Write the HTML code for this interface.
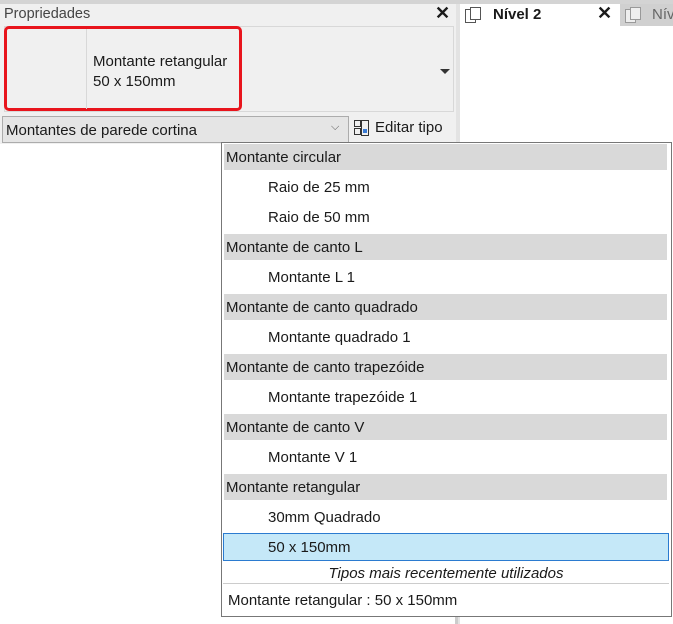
<!DOCTYPE html>
<html><head><meta charset="utf-8"><style>
*{margin:0;padding:0;box-sizing:border-box}
body{width:673px;height:624px;position:relative;overflow:hidden;background:#fff;font-family:"Segoe UI","Liberation Sans",sans-serif;font-size:15px;color:#1a1a1a}
.a{position:absolute}
.row{position:absolute;left:224px;width:443px;height:26px;line-height:28px;white-space:nowrap}
.g{background:#d9d9d9;padding-left:2px}
.i{padding-left:44px}
</style></head><body>
<div class="a" style="left:0;top:0;width:673px;height:4px;background:#d4d4d4"></div>
<div class="a" style="left:0;top:4px;width:456px;height:140px;background:#f0f0f0"></div>
<div class="a" style="left:456px;top:4px;width:4px;height:620px;background:#e3e3e3"></div>
<div class="a" style="left:4px;top:6px;color:#444;font-size:14.5px">Propriedades</div>
<div class="a" style="left:435px;top:3px;font-size:18px;font-weight:bold">✕</div>
<div class="a" style="left:4px;top:26px;width:450px;height:86px;border:1px solid #d8d8d8"></div>
<div class="a" style="left:4px;top:26px;width:238px;height:85px;border:3px solid #e8141c;border-radius:5px"></div>
<div class="a" style="left:86px;top:29px;width:1px;height:80px;background:#d8d8d8"></div>
<div class="a" style="left:93px;top:52px;line-height:20px">Montante retangular<br>50 x 150mm</div>
<div class="a" style="left:440px;top:69px;width:0;height:0;border-left:5px solid transparent;border-right:5px solid transparent;border-top:5px solid #333"></div>
<div class="a" style="left:2px;top:116px;width:347px;height:27px;border:1px solid #acacac;background:#e5e5e5;padding-left:3px;line-height:27px">Montantes de parede cortina</div>
<div class="a" style="left:331px;top:121px;font-size:11px;color:#555">⌵</div>
<svg class="a" style="left:353px;top:119px" width="18" height="18" viewBox="0 0 18 18"><g fill="none" stroke="#333"><rect x="1.5" y="1.5" width="6" height="6"/><rect x="1.5" y="9.5" width="6" height="6"/><rect x="8.5" y="1.5" width="7" height="15"/></g><rect x="10" y="10" width="4" height="4" fill="#3a7bd5"/></svg>
<div class="a" style="left:375px;top:119px">Editar tipo</div>
<div class="a" style="left:460px;top:4px;width:160px;height:22px;background:#fff"></div>
<div class="a" style="left:620px;top:4px;width:53px;height:22px;background:#d0d0d0"></div>
<svg class="a" style="left:464px;top:6px" width="18" height="18"><rect x="1.5" y="3.5" width="10" height="13" fill="#fff" stroke="#555"/><rect x="6.5" y="1.5" width="10" height="12" fill="#fff" stroke="#555"/></svg>
<div class="a" style="left:493px;top:6px;font-weight:bold">Nível 2</div>
<div class="a" style="left:597px;top:3px;font-size:18px;font-weight:bold">✕</div>
<svg class="a" style="left:624px;top:6px" width="18" height="18"><rect x="1.5" y="3.5" width="10" height="13" fill="#eee" stroke="#999"/><rect x="6.5" y="1.5" width="10" height="12" fill="#eee" stroke="#999"/></svg>
<div class="a" style="left:652px;top:6px;color:#666">Nív</div>
<div class="a" style="left:221px;top:142px;width:451px;height:475px;border:1px solid #777;background:#fff"></div>
<div class="row g" style="top:144px">Montante circular</div>
<div class="row i" style="top:174px">Raio de 25 mm</div>
<div class="row i" style="top:204px">Raio de 50 mm</div>
<div class="row g" style="top:234px">Montante de canto L</div>
<div class="row i" style="top:264px">Montante L 1</div>
<div class="row g" style="top:294px">Montante de canto quadrado</div>
<div class="row i" style="top:324px">Montante quadrado 1</div>
<div class="row g" style="top:354px">Montante de canto trapezóide</div>
<div class="row i" style="top:384px">Montante trapezóide 1</div>
<div class="row g" style="top:414px">Montante de canto V</div>
<div class="row i" style="top:444px">Montante V 1</div>
<div class="row g" style="top:474px">Montante retangular</div>
<div class="row i" style="top:504px">30mm Quadrado</div>
<div class="a" style="left:223px;top:533px;width:446px;height:28px;background:#c5e8f8;border:1px solid #2b7bd0;padding-left:44px;line-height:28px">50 x 150mm</div>
<div class="a" style="left:223px;top:562px;width:446px;height:22px;text-align:center;font-style:italic;line-height:24px;border-bottom:1px solid #ccc">Tipos mais recentemente utilizados</div>
<div class="a" style="left:228px;top:592px">Montante retangular : 50 x 150mm</div>
<div class="a" style="left:455px;top:617px;width:3px;height:7px;background:#ccc"></div>
</body></html>
